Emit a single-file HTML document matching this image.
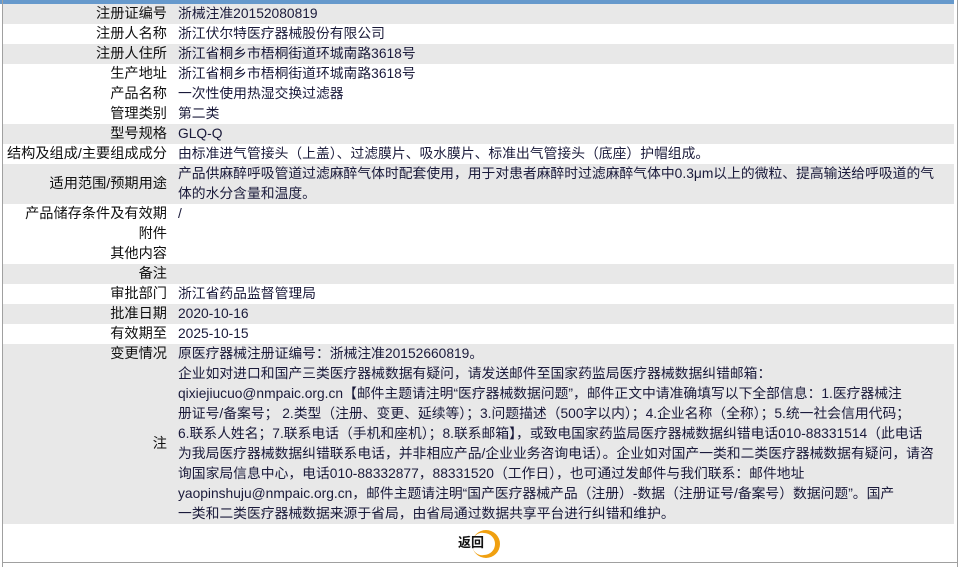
<!DOCTYPE html>
<html><head><meta charset="utf-8"><style>
body{margin:0;width:960px;height:567px;background:#fff;position:relative;overflow:hidden;font-family:"Liberation Sans","Noto Sans CJK SC",sans-serif;}
.top{position:absolute;left:0;top:0;width:954px;height:4px;background:#6699cc}
.lb{position:absolute;left:2px;top:0;width:1px;height:567px;background:#a0a0a0}
.rb{position:absolute;left:957px;top:0;width:1px;height:567px;background:#a0a0a0}
.bb{position:absolute;left:2px;top:562px;width:956px;height:1px;background:#a0a0a0}
.r{position:absolute;left:3px;width:951px;height:20px}
.g{background:#e8e8e8}
.l{position:absolute;right:793px;font-size:14.2px;line-height:20px;color:#111;white-space:nowrap}
.v{position:absolute;left:178px;font-size:13.8px;line-height:20px;color:#1a1a3a;white-space:nowrap}
</style></head><body>
<div class="top"></div>
<div class="r g" style="top:4px"></div>
<div class="r g" style="top:44px"></div>
<div class="r g" style="top:124px"></div>
<div class="r g" style="top:164px;height:40px"></div>
<div class="r g" style="top:264px"></div>
<div class="r g" style="top:304px"></div>
<div class="r g" style="top:344px;height:180px"></div>
<div class="lb"></div><div class="rb"></div><div class="bb"></div>

<div class="l" style="top:4px">注册证编号</div><div class="v" style="top:4px">浙械注准20152080819</div>
<div class="l" style="top:24px">注册人名称</div><div class="v" style="top:24px">浙江伏尔特医疗器械股份有限公司</div>
<div class="l" style="top:44px">注册人住所</div><div class="v" style="top:44px">浙江省桐乡市梧桐街道环城南路3618号</div>
<div class="l" style="top:64px">生产地址</div><div class="v" style="top:64px">浙江省桐乡市梧桐街道环城南路3618号</div>
<div class="l" style="top:84px">产品名称</div><div class="v" style="top:84px">一次性使用热湿交换过滤器</div>
<div class="l" style="top:104px">管理类别</div><div class="v" style="top:104px">第二类</div>
<div class="l" style="top:124px">型号规格</div><div class="v" style="top:124px">GLQ-Q</div>
<div class="l" style="top:144px">结构及组成/主要组成成分</div><div class="v" style="top:144px">由标准进气管接头（上盖）、过滤膜片、吸水膜片、标准出气管接头（底座）护帽组成。</div>
<div class="l" style="top:174px">适用范围/预期用途</div><div class="v" style="top:164px">产品供麻醉呼吸管道过滤麻醉气体时配套使用，用于对患者麻醉时过滤麻醉气体中0.3μm以上的微粒、提高输送给呼吸道的气<br>体的水分含量和温度。</div>
<div class="l" style="top:204px">产品储存条件及有效期</div><div class="v" style="top:204px">/</div>
<div class="l" style="top:224px">附件</div>
<div class="l" style="top:244px">其他内容</div>
<div class="l" style="top:264px">备注</div>
<div class="l" style="top:284px">审批部门</div><div class="v" style="top:284px">浙江省药品监督管理局</div>
<div class="l" style="top:304px">批准日期</div><div class="v" style="top:304px">2020-10-16</div>
<div class="l" style="top:324px">有效期至</div><div class="v" style="top:324px">2025-10-15</div>
<div class="l" style="top:344px">变更情况</div>
<div class="l" style="top:434px">注</div>
<div class="v" style="top:344px">原医疗器械注册证编号：浙械注准20152660819。<br>企业如对进口和国产三类医疗器械数据有疑问，请发送邮件至国家药监局医疗器械数据纠错邮箱：<br>qixiejiucuo@nmpaic.org.cn【邮件主题请注明“医疗器械数据问题”，邮件正文中请准确填写以下全部信息：1.医疗器械注<br>册证号/备案号； 2.类型（注册、变更、延续等）；3.问题描述（500字以内）；4.企业名称（全称）；5.统一社会信用代码；<br>6.联系人姓名；7.联系电话（手机和座机）；8.联系邮箱】，或致电国家药监局医疗器械数据纠错电话010-88331514（此电话<br>为我局医疗器械数据纠错联系电话，并非相应产品/企业业务咨询电话）。企业如对国产一类和二类医疗器械数据有疑问，请咨<br>询国家局信息中心，电话010-88332877，88331520（工作日），也可通过发邮件与我们联系：邮件地址<br>yaopinshuju@nmpaic.org.cn，邮件主题请注明“国产医疗器械产品（注册）-数据（注册证号/备案号）数据问题”。国产<br>一类和二类医疗器械数据来源于省局，由省局通过数据共享平台进行纠错和维护。</div>

<svg style="position:absolute;left:468px;top:529px" width="36" height="30" viewBox="0 0 36 30">
<path d="M18 1 A14 14 0 1 1 18 29 A14 14 0 0 1 4 15 A10 11 0 0 0 16 26 A11 11 0 0 0 16 4 A10 11 0 0 0 4 15 A14 14 0 0 1 18 1 Z" fill="#f0a010"/>
</svg>
<div style="position:absolute;left:458px;top:535px;font-size:13px;font-weight:bold;color:#111;line-height:16px">返回</div>
</body></html>
